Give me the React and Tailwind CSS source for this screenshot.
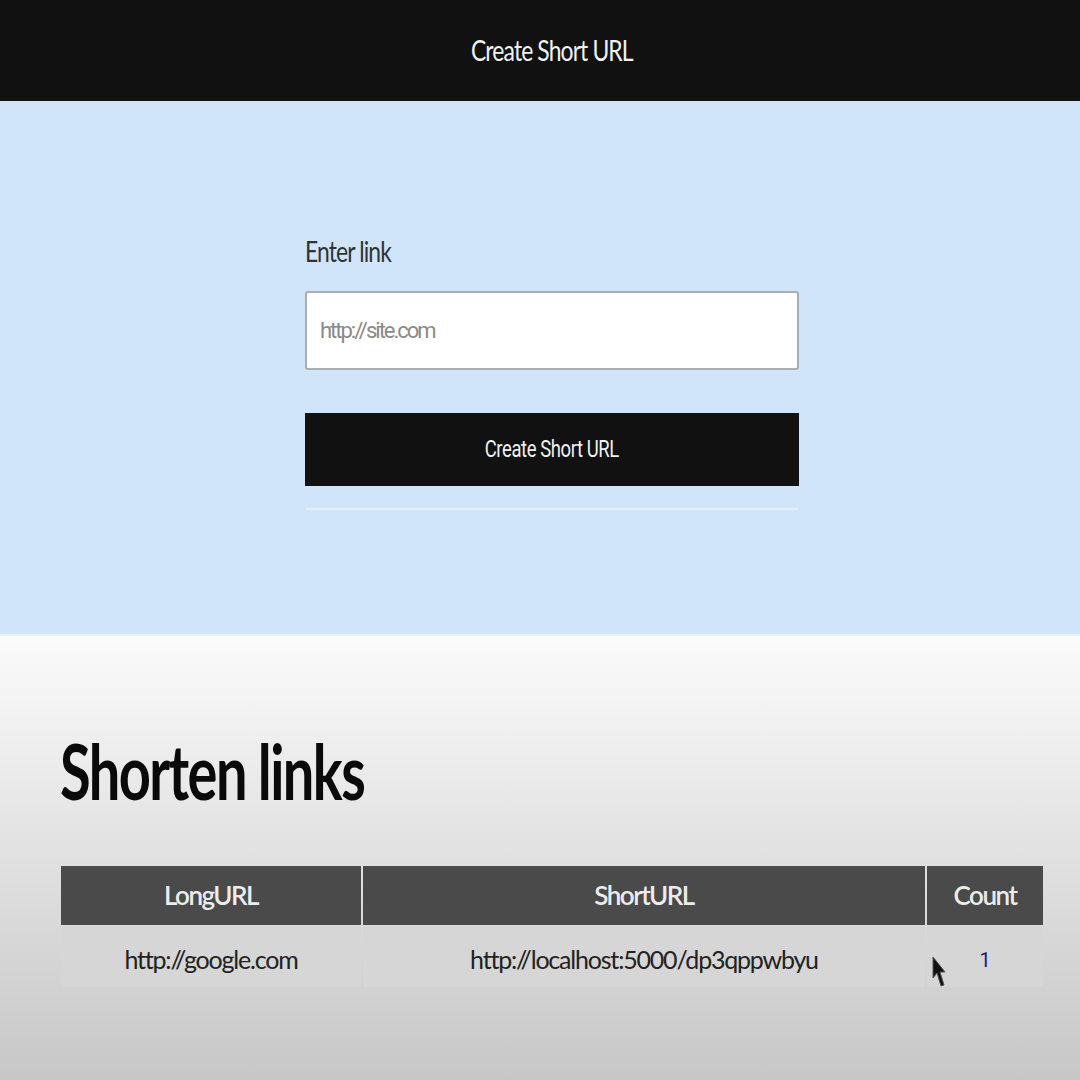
import React, { useState } from 'react';

const App = () => {
  const [link, setLink] = useState('');
  const links = [
    { longUrl: 'http://google.com', shortUrl: 'http://localhost:5000/dp3qppwbyu', count: 1 }
  ];

  return (
    <div className="w-[1080px] h-[1080px] overflow-hidden flex flex-col font-['Lato','Open_Sans',sans-serif]">
      <div className="h-[101px] bg-[#111111] flex items-center justify-center pl-[24px]">
        <h1 className="text-[26px] text-[#f2f2f2] tracking-[-1px] scale-x-[0.88] scale-y-110">Create Short URL</h1>
      </div>

      <div className="h-[535px] bg-[#d0e5f9] border-b-2 border-[#e6f4f8] flex justify-center pl-[24px]">
        <form className="w-[494px] pt-[134px] flex flex-col" onSubmit={(e) => e.preventDefault()}>
          <label htmlFor="link" className="text-[26px] text-[#2f3336] tracking-[-1px] leading-[32px] scale-x-[0.88] scale-y-110 origin-left">
            Enter link
          </label>
          <input
            id="link"
            type="text"
            value={link}
            onChange={(e) => setLink(e.target.value)}
            placeholder="http://site.com"
            className="mt-[24px] h-[79px] bg-white border-2 border-[#a9aeb3] rounded-[3px] px-[13px] text-[22px] tracking-[-2px] font-['Roboto',sans-serif] placeholder:text-[#8a8a8a] outline-none"
          />
          <button
            type="submit"
            className="mt-[43px] h-[73px] bg-[#111111] text-[#f0f0f0] text-[22px] font-['Roboto',sans-serif]"
          >
            <span className="inline-block scale-x-[0.84] scale-y-105 tracking-[-0.5px]">Create Short URL</span>
          </button>
          <div className="mt-[22px] h-[2px] bg-[#e2eff8]"></div>
        </form>
      </div>

      <div className="flex-1 bg-gradient-to-b from-[#fbfbfb] to-[#c7c7c7] px-[60px] pt-[92px] relative">
        <h2 className="text-[70px] font-bold text-[#0a0a0a] tracking-[-2px] leading-[84px] scale-x-[0.8] scale-y-110 origin-left">Shorten links</h2>
        <table className="mt-[52px] ml-[-1px] w-[986px] border-separate border-spacing-[2px]">
          <thead>
            <tr className="h-[59px]">
              <th className="w-[300px] bg-[#4a4a4a] text-[#ececec] text-[26px] font-semibold tracking-[-1.5px]">LongURL</th>
              <th className="bg-[#4a4a4a] text-[#ececec] text-[26px] font-semibold tracking-[-1.5px]">ShortURL</th>
              <th className="w-[116px] bg-[#4a4a4a] text-[#ececec] text-[26px] font-semibold tracking-[-1.5px]">Count</th>
            </tr>
          </thead>
          <tbody>
            {links.map((l) => (
              <tr key={l.shortUrl} className="h-[60px]">
                <td className="bg-[#d6d6d6] text-center text-[25px] text-[#222] tracking-[-1.2px] pt-[6px]">{l.longUrl}</td>
                <td className="bg-[#d6d6d6] text-center text-[25px] text-[#222] tracking-[-1.2px] pt-[6px]">{l.shortUrl}</td>
                <td className="bg-[#d6d6d6] text-center text-[20px] text-[#1c1c80] font-['Roboto',sans-serif] pt-[6px]">{l.count}</td>
              </tr>
            ))}
          </tbody>
        </table>
        <svg className="absolute left-[932px] top-[320px]" width="14" height="32" viewBox="0 0 14 32">
          <path d="M1 1 L1 22 L5 17 L9 30 L12 29 L8 16 L13 16 Z" fill="#111" stroke="#555" strokeWidth="1" />
        </svg>
      </div>
    </div>
  );
};

export default App;
